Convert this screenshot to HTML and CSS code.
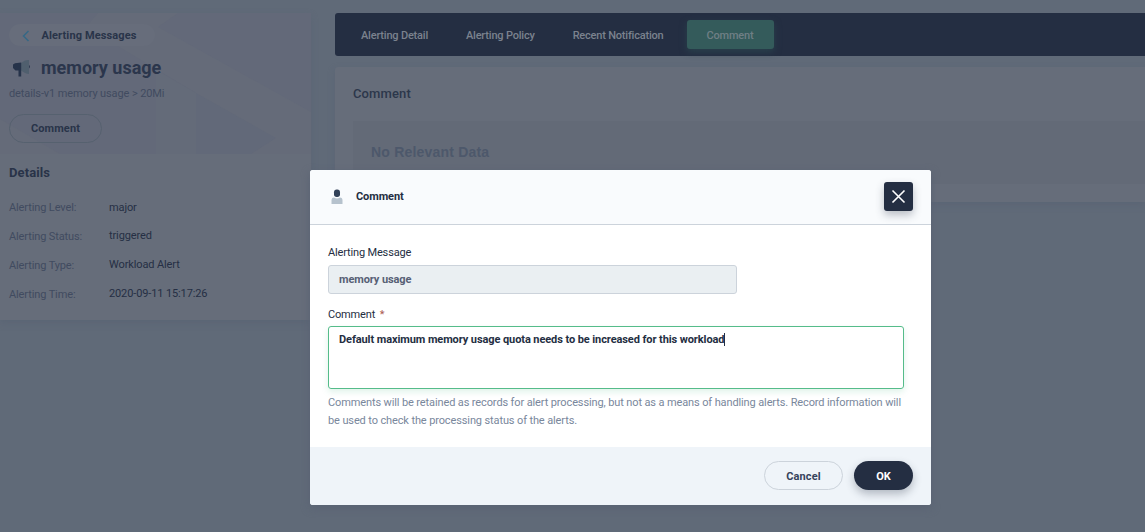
FILE: index.html
```html
<!DOCTYPE html>
<html lang="en">
<head>
<meta charset="utf-8">
<title>Alerting Messages</title>
<link rel="stylesheet" href="styles.css">
</head>
<body>
<div class="page">
  <aside class="sidebar">
    <div class="summary">
      <svg class="backdrop" width="311" height="141" viewBox="0 0 311 141">
        <path fill="#656b79" d="M98 0h80l-20 14 153 85v42H196V80L86 14zM0 106l60 35H0z"/>
        <path fill="#626979" d="M196 80l80 45-25 16h-55z"/>
        <path fill="#646b79" d="M156 57l40 23v61h-40z"/>
      </svg>
      <a class="back">
        <svg width="8" height="12" viewBox="0 0 8 12"><path d="M6.500 1L1.500 6l5 5" fill="none" stroke="#356886" stroke-width="1.500"/></svg>
        <span>Alerting Messages</span>
      </a>
      <h1 class="title">
        <svg width="20" height="20" viewBox="0 0 20 20">
          <path fill="#505f6e" d="M9 5l4-2.500q2-.8 4-.5v14q-2 0-4-1L9 12.500z"/>
          <path fill="#26334a" d="M3 5.200L9.200 4.500V18.500H6.500V12.500H3.500L1 10V6.500zM17 7q1.800 1.500 0 3.500z"/>
        </svg>
        <span>memory usage</span>
      </h1>
      <p class="rule">details-v1 memory usage &gt; 20Mi</p>
      <button class="comment-btn">Comment</button>
    </div>
    <div class="details">
      <h2>Details</h2>
      <dl>
        <div><dt>Alerting Level:</dt><dd class="level">major</dd></div>
        <div><dt>Alerting Status:</dt><dd>triggered</dd></div>
        <div><dt>Alerting Type:</dt><dd>Workload Alert</dd></div>
        <div><dt>Alerting Time:</dt><dd>2020-09-11 15:17:26</dd></div>
      </dl>
    </div>
  </aside>
  <main class="main">
    <nav class="tabs">
      <a>Alerting Detail</a><a>Alerting Policy</a><a>Recent Notification</a><a class="active">Comment</a>
    </nav>
    <section class="card">
      <h3>Comment</h3>
      <div class="empty">No Relevant Data</div>
    </section>
  </main>
</div>
<div class="overlay">
  <div class="modal">
    <header class="modal-head">
      <svg width="14" height="16" viewBox="0 0 14 16">
        <rect x="4" y=".5" width="6" height="7.500" rx="2.700" fill="#324158"/>
        <path fill="#b6c2cd" d="M1.500 15v-3.500q0-2.800 2.500-3 3 1.800 6 0 2.500.2 2.500 3v3.500z"/>
      </svg>
      <span class="modal-title">Comment</span>
      <button class="close"><svg width="15" height="15" viewBox="0 0 15 15"><path d="M1.500 1.500l12 12M13.500 1.500l-12 12" stroke="#fff" stroke-width="1.600"/></svg></button>
    </header>
    <div class="modal-body">
      <label class="label">Alerting Message</label>
      <div class="input">memory usage</div>
      <label class="label second">Comment <i>*</i></label>
      <div class="textarea"><span>Default maximum memory usage quota needs to be increased for this workload</span><b class="caret"></b></div>
      <p class="hint">Comments will be retained as records for alert processing, but not as a means of handling alerts. Record information will<br>be used to check the processing status of the alerts.</p>
    </div>
    <footer class="modal-foot">
      <button class="cancel">Cancel</button>
      <button class="ok">OK</button>
    </footer>
  </div>
</div>
</body>
</html>
```
FILE: styles.css
```css
* { box-sizing: border-box; margin: 0; padding: 0; }
body { width: 1145px; height: 532px; overflow: hidden; background: #606a78; font: 11px/18px Roboto, sans-serif; color: #242e42; }
button { font: inherit; color: inherit; background: none; border: 0; display: flex; align-items: center; justify-content: center; }
svg { flex: none; }
.page { display: flex; gap: 24px; padding-top: 13px; height: 532px; align-items: flex-start; }
.sidebar { width: 311px; height: 307px; flex: none; background: #666d7a; box-shadow: 0 3px 6px #5b6575; border-top-right-radius: 4px; }
.summary { position: relative; height: 141px; padding: 11px 9px 0; background: #636979; }
.summary > * { position: relative; }
.summary > .backdrop { position: absolute; left: 0; top: 0; }
.back { display: flex; align-items: center; width: 146px; height: 22px; border-radius: 11px; background: #676d7b; padding: 1px 0 0 13px; gap: 11.5px; font-weight: 700; letter-spacing: .12px; color: #293449; }
.title { display: flex; align-items: center; gap: 9px; margin-top: 10px; height: 24px; padding-left: 3px; font-size: 18px; font-weight: 700; color: #2b364c; }
.rule { margin-top: 5px; letter-spacing: -.11px; color: #414b60; }
.comment-btn { margin-top: 11px; width: 93px; height: 29px; border: 1px solid #56616f; border-radius: 15px; font-weight: 700; letter-spacing: .12px; color: #293449; }
.details { padding: 9px 9px 0; }
.details h2 { font-size: 13px; line-height: 20px; font-weight: 700; letter-spacing: .1px; color: #293348; }
.details dl { margin-top: 10px; }
.details dl div { display: flex; height: 29px; align-items: center; }
.details dt { width: 100px; letter-spacing: -.12px; color: #414b60; }
.details dd { color: #252f44; letter-spacing: -.12px; margin-top: -1px; }
.details dd.level { margin-top: 0; }
.main { width: 810px; }
.tabs { display: flex; align-items: center; height: 43px; background: #242e42; border-radius: 3px 0 0 3px; padding-left: 26px; font-weight: 500; letter-spacing: -.2px; line-height: 20px; color: #7b828e; gap: 38px; }
.tabs a { padding-top: 2px; }
.tabs .active { margin-left: -15px; width: 87px; height: 29px; line-height: 28px; text-align: center; border-radius: 3px; background: #345b5b; box-shadow: 0 3px 7px #29414c; color: #6f7f85; }
.card { margin-top: 11px; height: 135px; padding: 17px 0 0 18px; background: #666d7a; border-radius: 3px 0 0 3px; box-shadow: 0 3px 6px #5b6575; }
.card h3 { font-size: 13px; line-height: 20px; font-weight: 500; letter-spacing: .12px; color: #2c374b; }
.empty { margin-top: 17px; height: 63px; padding-left: 18px; line-height: 62px; background: #636a77; font-family: "Liberation Sans", Arial, sans-serif; font-size: 14px; font-weight: 700; letter-spacing: .2px; color: #4d586b; }
.overlay { position: absolute; left: 0; top: 0; width: 1145px; height: 532px; padding: 170px 0 0 310px; }
.modal { width: 621px; height: 335px; background: #fff; border-radius: 3px; overflow: hidden; box-shadow: 0 3px 8px #596273; display: flex; flex-direction: column; }
.modal-head { height: 55px; flex: none; display: flex; align-items: center; background: #f9fbfd; border-bottom: 1px solid #ccd3db; padding: 0 18px 0 20px; }
.modal-title { margin-left: 12px; font-weight: 700; letter-spacing: -.1px; }
.close { margin-left: auto; margin-top: -1px; width: 29px; height: 29px; border-radius: 3px; background: #242e42; box-shadow: 0 4px 9px rgba(36,46,66,.3); }
.modal-body { flex: 1; padding: 19px 18px 0; }
.label { display: block; height: 18px; letter-spacing: -.16px; }
.label i { font-style: normal; color: #ab5a50; margin-left: 2px; }
.second { margin-top: 12px; }
.input { width: 409px; height: 29px; margin-top: 3px; padding-left: 10px; line-height: 27px; border: 1px solid #ccd3db; border-radius: 3px; background: #eaeff2; font-weight: 700; letter-spacing: -.1px; color: #576075; }
.textarea { display: flex; width: 576px; height: 63px; margin-top: 2px; padding: 4px 10px; border: 1px solid #55bc8a; border-radius: 3px; font-weight: 700; letter-spacing: -.09px; box-shadow: 0 3px 6px rgba(85,188,138,.18); }
.caret { width: 1px; height: 13px; margin-top: 2px; background: #242e42; }
.hint { margin-top: 5px; letter-spacing: -.12px; color: #79879c; white-space: nowrap; }
.modal-foot { height: 58px; flex: none; display: flex; align-items: flex-start; justify-content: flex-end; gap: 11px; padding: 14px 18px 0 0; background: #eff4f9; font-weight: 700; }
.modal-foot button { padding-top: 2px; }
.cancel { width: 79px; height: 29px; border: 1px solid #ccd3db; border-radius: 15px; letter-spacing: .1px; color: #36435c; }
.ok { width: 59px; height: 29px; border-radius: 15px; background: #242e42; color: #fff; box-shadow: 0 4px 9px rgba(36,46,66,.3); }
```
